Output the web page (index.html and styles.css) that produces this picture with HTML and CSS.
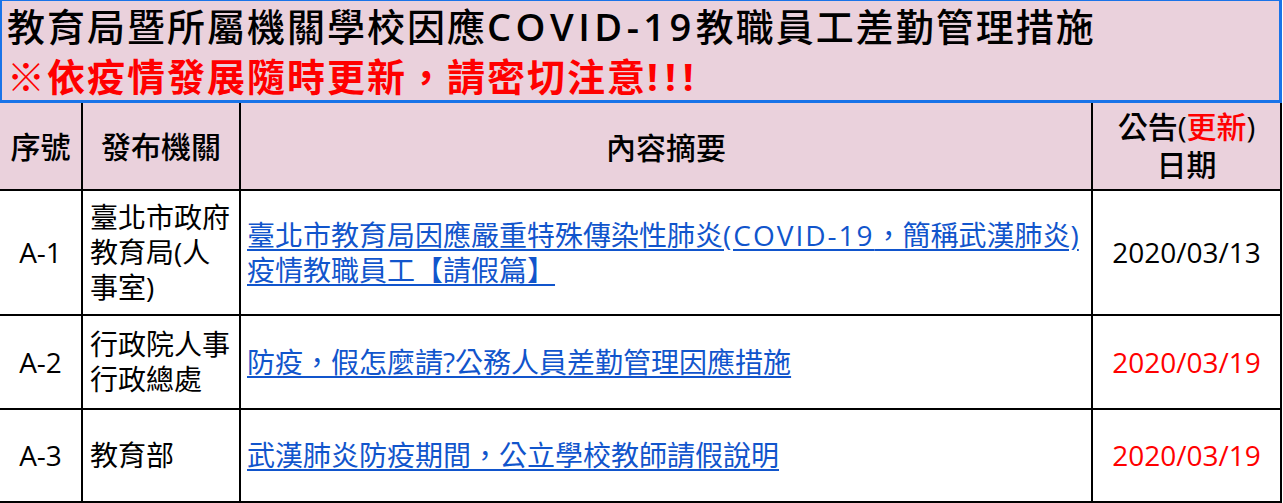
FILE: index.html
```html
<!DOCTYPE html>
<html lang="zh-Hant">
<head>
<meta charset="utf-8">
<title>教育局暨所屬機關學校因應COVID-19教職員工差勤管理措施</title>
<link rel="stylesheet" href="styles.css">
</head>
<body>
<div class="sheet">
  <div class="title">
    <div class="title-main">教育局暨所屬機關學校因應<span class="title-latin">COVID-19</span>教職員工差勤管理措施</div>
    <div class="title-note">※依疫情發展隨時更新，請密切注意<span class="bang">!!!</span></div>
  </div>
  <div class="grid">
    <div class="cell head c1"><div class="in">序號</div></div>
    <div class="cell head c2"><div class="in">發布機關</div></div>
    <div class="cell head c3"><div class="in">內容摘要</div></div>
    <div class="cell head c4"><div class="in">公告(<span class="red">更新</span>)<br>日期</div></div>

    <div class="cell c1"><div class="in">A-1</div></div>
    <div class="cell c2"><div class="in">臺北市政府<br>教育局(人<br>事室)</div></div>
    <div class="cell c3"><div class="in"><a href="#">臺北市教育局因應嚴重特殊傳染性肺炎<span class="latin">(COVID-19</span>，簡稱武漢肺炎)<br>疫情教職員工【請假篇】</a></div></div>
    <div class="cell c4"><div class="in">2020/03/13</div></div>

    <div class="cell c1"><div class="in">A-2</div></div>
    <div class="cell c2"><div class="in">行政院人事<br>行政總處</div></div>
    <div class="cell c3"><div class="in"><a href="#">防疫，假怎麼請?公務人員差勤管理因應措施</a></div></div>
    <div class="cell c4 red"><div class="in">2020/03/19</div></div>

    <div class="cell c1"><div class="in">A-3</div></div>
    <div class="cell c2"><div class="in">教育部</div></div>
    <div class="cell c3"><div class="in"><a href="#">武漢肺炎防疫期間，公立學校教師請假說明</a></div></div>
    <div class="cell c4 red"><div class="in">2020/03/19</div></div>
  </div>
</div>
</body>
</html>
```

FILE: styles.css
```css
html, body {
  margin: 0;
  padding: 0;
  background: #ffffff;
}

body {
  font-family: "Open Sans", "Noto Sans CJK TC", sans-serif;
  color: #000000;
  width: 1283px;
  height: 503px;
  overflow: hidden;
}

.sheet {
  width: 1282px;
}

.title {
  box-sizing: border-box;
  width: 1282px;
  height: 103px;
  background: #ead1dc;
  border-top: 1px solid #1a73e8;
  border-left: 2px solid #1a73e8;
  border-right: 3px solid #1a73e8;
  border-bottom: 3px solid #1a73e8;
  padding: 0 0 0 5px;
  font-size: 38px;
  font-weight: 500;
  line-height: 50px;
  letter-spacing: 2px;
}

.title-main {
  color: #000000;
  white-space: nowrap;
}

.title-latin {
  font-weight: 600;
  letter-spacing: 4.5px;
}

.title-note {
  color: #ff0000;
  white-space: nowrap;
  font-weight: 700;
}

.bang {
  letter-spacing: 7px;
}

.grid {
  display: grid;
  grid-template-columns: 83px 158px 852px 189px;
  grid-template-rows: 88px 125px 94px 93px;
}

.cell {
  border-right: 2px solid #000000;
  border-bottom: 2px solid #000000;
  display: flex;
  align-items: center;
  font-size: 28px;
  line-height: 35px;
  background: #ffffff;
}

.in {
  white-space: nowrap;
}

.head {
  background: #ead1dc;
  font-size: 30px;
  font-weight: 500;
  line-height: 38px;
  justify-content: center;
  text-align: center;
  padding-top: 2px;
}

.c1 {
  justify-content: center;
  text-align: center;
}

.c2 {
  padding-left: 7px;
}

.c3 {
  padding-left: 6px;
  line-height: 35px;
}

.head.c2,
.head.c3 {
  padding-left: 0;
}

.c4 {
  justify-content: center;
  text-align: center;
}

.head.c4 {
  padding-top: 0;
}

.latin {
  letter-spacing: 2px;
}

.red {
  color: #ff0000;
}

a {
  color: #1155cc;
  text-decoration: underline;
  text-underline-offset: 3px;
}
```
